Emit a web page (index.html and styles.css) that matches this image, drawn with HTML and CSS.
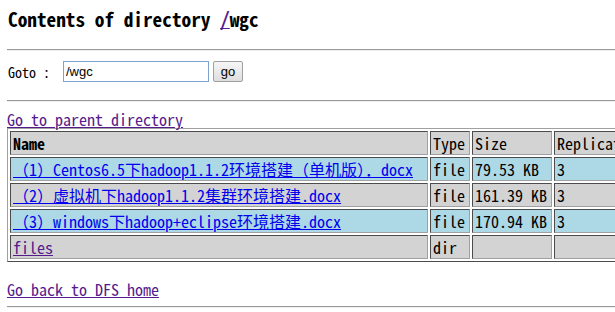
FILE: index.html
```html
<!DOCTYPE html>
<html lang="zh-cn">
<head>
  <meta charset="UTF-8">
  <title>HDFS:/wgc</title>
  <link rel="stylesheet" href="styles.css">
</head>
<body>

  <!-- Directory title -->
  <h3 class="titulo">Contents of directory <a href="#">/</a>wgc</h3>
  <hr>

  <form class="goto-form">
    <span class="goto-label">Goto : </span>
    <input type="text" class="goto-input" value="/wgc">
    <button type="submit" class="goto-btn">go</button>
  </form>
  <hr>

  <a href="#" class="visitado">Go to parent directory</a>

  <!-- Listing -->
  <table class="lista">
    <tr class="cabecalho">
      <td class="col-nome"><b>Name</b></td>
      <td class="col-tipo">Type</td>
      <td class="col-size">Size</td>
      <td class="col-rep">Replication</td>
    </tr>
    <tr class="linha-azul">
      <td><a href="#">（1）Centos6.5下hadoop1.1.2环境搭建（单机版）．docx</a></td>
      <td>file</td>
      <td>79.53 KB</td>
      <td>3</td>
    </tr>
    <tr class="linha-cinza">
      <td><a href="#">（2）虚拟机下hadoop1.1.2集群环境搭建.docx</a></td>
      <td>file</td>
      <td>161.39 KB</td>
      <td>3</td>
    </tr>
    <tr class="linha-azul">
      <td><a href="#">（3）windows下hadoop+eclipse环境搭建.docx</a></td>
      <td>file</td>
      <td>170.94 KB</td>
      <td>3</td>
    </tr>
    <tr class="linha-cinza">
      <td><a href="#" class="visitado">files</a></td>
      <td>dir</td>
      <td></td>
      <td></td>
    </tr>
  </table>

  <br>
  <a href="#" class="visitado">Go back to DFS home</a>
  <hr>

</body>
</html>
```

FILE: styles.css
```css
body {
  margin: 8px 8px 8px 7px;
  font-family: "Noto Sans Mono CJK SC", "Liberation Mono", "Noto Sans CJK SC", monospace;
  font-size: 16px;
  line-height: 18px;
  color: #000;
  background: #fff;
  width: 800px;
}

a {
  color: #0000ee;
}

a.visitado {
  color: #551a8b;
}

.titulo {
  font-size: 19.3px;
  line-height: 22px;
  font-weight: 600;
  margin: 0 0 19px 1px;
}

.titulo a {
  color: #551a8b;
}

hr {
  border: none;
  border-top: 1px solid #9a9a9a;
  border-bottom: 1px solid #eee;
  margin: 0;
  width: 608px;
}

.goto-form {
  display: flex;
  align-items: center;
  height: 21px;
  margin: 10px 0 18px 1px;
}

.goto-label {
  white-space: pre;
  font-size: 14px;
  margin-right: 6px;
}

.goto-input {
  box-sizing: border-box;
  width: 146px;
  height: 21px;
  padding: 1px 2px;
  border: 1px solid #7da2ce;
  font-family: "Liberation Sans", Arial, sans-serif;
  font-size: 13px;
  margin: 0 4px 0 0;
}

.goto-btn {
  box-sizing: border-box;
  width: 30px;
  height: 21px;
  padding: 0;
  border: 1px solid #a0a0a0;
  border-radius: 2px;
  background: linear-gradient(#f6f6f6, #dedede);
  font-family: "Liberation Sans", Arial, sans-serif;
  font-size: 13px;
}

hr + .visitado {
  display: inline-block;
  margin-top: 8px;
}

.lista {
  border: 1px outset #a0a0a0;
  border-spacing: 2px;
  white-space: nowrap;
}

.lista td {
  border: 1px inset #a0a0a0;
  padding: 1px 1px 1px 2px;
  height: 20px;
}

.cabecalho td,
.linha-cinza td {
  background: #d3d3d3;
}

.linha-azul td {
  background: #add8e6;
}

.col-nome {
  width: 413px;
}

.col-tipo {
  width: 35px;
}

.col-size {
  width: 75px;
}

.col-rep {
  width: 100px;
}

.lista + br + .visitado {
  display: inline-block;
  margin-bottom: 8px;
}
```
